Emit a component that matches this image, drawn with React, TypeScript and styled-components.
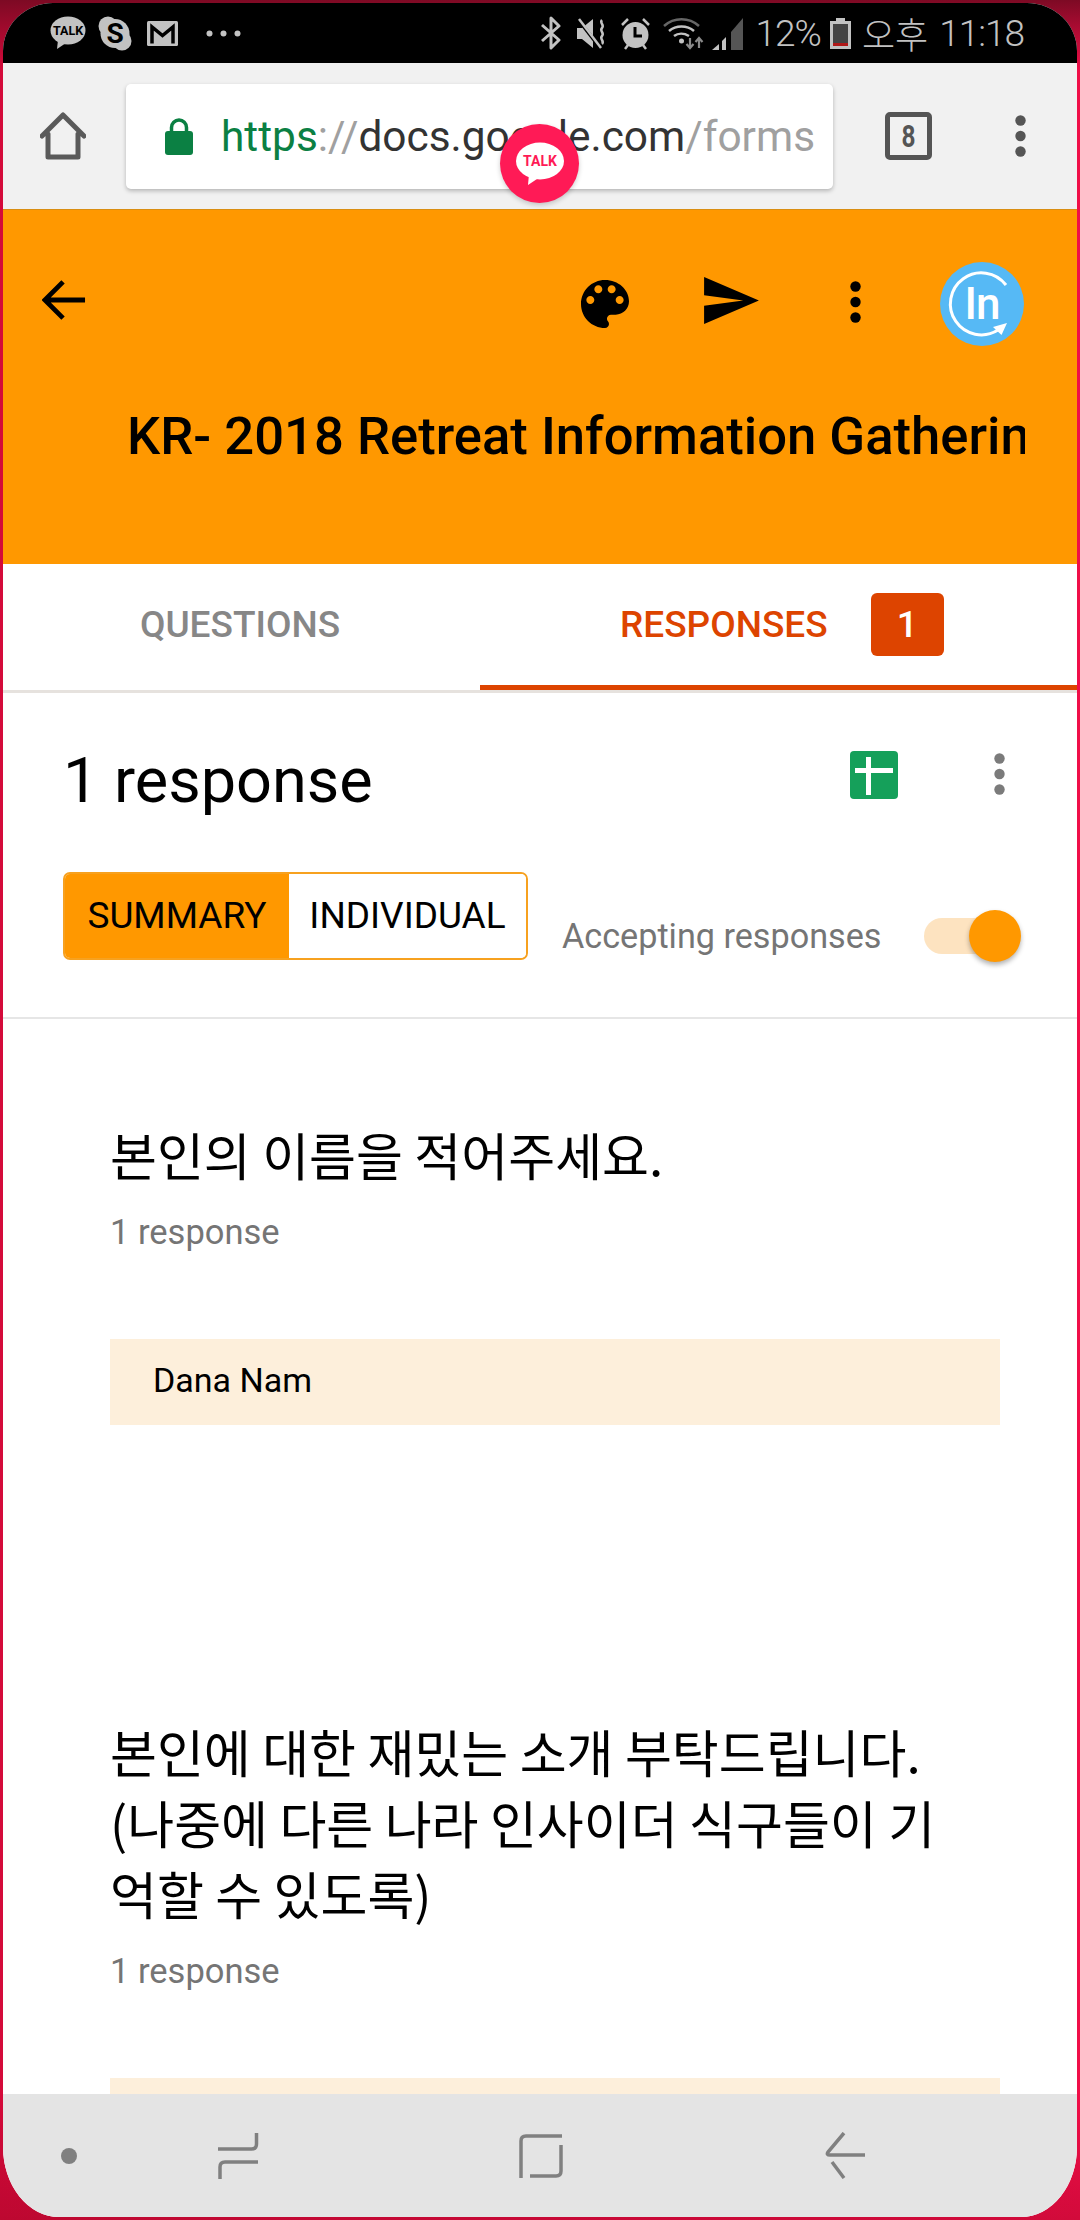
import styled, { createGlobalStyle } from 'styled-components';

const ORANGE = '#ff9800';
const RUST = '#dd4400';
const UI_FONT = `Roboto, 'Noto Sans CJK KR', sans-serif`;

const GlobalStyle = createGlobalStyle`
  html, body {
    margin: 0;
    padding: 0;
    background: #000;
  }
  * {
    box-sizing: border-box;
  }
`;

const Frame = styled.div`
  width: 1080px;
  height: 2220px;
  padding: 3px;
  overflow: hidden;
  font-family: ${UI_FONT};
  background:
    linear-gradient(to bottom, #7d0a24 0, rgba(125, 10, 36, 0) 70px),
    linear-gradient(to bottom, rgba(0, 0, 0, 0) 2100px, rgba(120, 0, 20, 0.25) 2220px),
    linear-gradient(to right, #d40a3a, #f00e48);
`;

const Screen = styled.div`
  position: relative;
  height: 100%;
  display: flex;
  flex-direction: column;
  overflow: hidden;
  background: #fff;
  border-radius: 50px 50px 56px 56px / 48px 48px 70px 70px;
`;

const StatusBar = styled.div`
  flex: 0 0 60px;
  display: flex;
  align-items: center;
  justify-content: space-between;
  padding: 0 53px 0 47px;
  background: #000;
  color: #c2c2c2;
`;

const StatusGroup = styled.div`
  display: flex;
  align-items: center;
`;

const StatusText = styled.span<{ $gap?: number }>`
  margin-left: ${(p) => p.$gap ?? 0}px;
  font-size: 37px;
  font-weight: 300;
  letter-spacing: -1px;
  line-height: 1;
`;

const StatusKorean = styled(StatusText)`
  font-family: 'Noto Sans CJK KR', sans-serif;
  font-size: 36px;
  font-weight: 300;
  letter-spacing: 0;
`;

const StatusIcon = styled.svg<{ $gap?: number }>`
  display: block;
  flex: none;
  margin-left: ${(p) => p.$gap ?? 0}px;
`;

const Toolbar = styled.div`
  flex: 0 0 147px;
  display: flex;
  align-items: center;
  padding-left: 37px;
  background: #f1f1f1;
  border-bottom: 1px solid #d98e12;
`;

const ToolIcon = styled.svg<{ $gap?: number; $lift?: number }>`
  display: block;
  flex: none;
  margin-left: ${(p) => p.$gap ?? 0}px;
  margin-bottom: ${(p) => (p.$lift ?? 0) * 2}px;
`;

const UrlBox = styled.div`
  width: 707px;
  height: 105px;
  margin-left: 40px;
  display: flex;
  align-items: center;
  padding-left: 39px;
  background: #fff;
  border-radius: 5px;
  box-shadow: 0 2px 4px rgba(0, 0, 0, 0.25);
`;

const UrlText = styled.div`
  margin-left: 28px;
  font-size: 42.4px;
  white-space: nowrap;
  color: #333;
`;

const UrlPart = styled.span<{ $color: string }>`
  color: ${(p) => p.$color};
`;

const ChatHead = styled.div`
  position: absolute;
  left: 497px;
  top: 121px;
  width: 79px;
  height: 79px;
  display: flex;
  align-items: center;
  justify-content: center;
  border-radius: 50%;
  background: #ff1a56;
  box-shadow: 0 2px 5px rgba(0, 0, 0, 0.2);
`;

const Header = styled.div`
  flex: 0 0 354px;
  display: flex;
  flex-direction: column;
  padding: 52px 53px 0 39px;
  background: ${ORANGE};
`;

const HeaderRow = styled.div`
  display: flex;
  align-items: center;
  height: 84px;
`;

const Spacer = styled.div`
  flex: 1;
`;

const Avatar = styled.div`
  position: relative;
  width: 84px;
  height: 84px;
  margin-left: 79px;
  display: flex;
  align-items: center;
  justify-content: center;
  border-radius: 50%;
  background: #56b9f5;
  color: #fff;
  font-size: 44px;
  font-weight: 500;
  letter-spacing: -1px;
`;

const AvatarRing = styled.svg`
  position: absolute;
  left: 0;
  top: 0;
`;

const FormTitle = styled.div`
  width: 898px;
  margin: 60px 0 0 85px;
  overflow: hidden;
  white-space: nowrap;
  font-size: 52.6px;
  font-weight: 500;
  line-height: 60px;
  color: #000;
`;

const Tabs = styled.div`
  flex: 0 0 129px;
  display: flex;
  border-bottom: 3px solid #e6e2de;
`;

const Tab = styled.div<{ $active?: boolean }>`
  flex: ${(p) => (p.$active ? '0 0 597px' : '0 0 477px')};
  display: flex;
  align-items: center;
  justify-content: ${(p) => (p.$active ? 'flex-start' : 'center')};
  padding: ${(p) => (p.$active ? '0 0 0 140px' : '0 3px 0 0')};
  font-size: 37px;
  font-weight: 500;
  color: ${(p) => (p.$active ? RUST : '#878787')};
  border-bottom: 5px solid ${(p) => (p.$active ? RUST : 'transparent')};
`;

const TabBadge = styled.span`
  width: 73px;
  height: 63px;
  margin-left: 43px;
  display: flex;
  align-items: center;
  justify-content: center;
  background: ${RUST};
  border-radius: 6px;
  color: #fff;
`;

const SummaryHead = styled.div`
  flex: 0 0 326px;
  display: flex;
  flex-direction: column;
  padding: 0 72px 0 60px;
  border-bottom: 2px solid #e6e6e6;
`;

const SummaryTop = styled.div`
  display: flex;
  align-items: center;
  height: 120px;
  margin-top: 27px;
`;

const ResponseCount = styled.div`
  flex: 1;
  font-size: 63px;
  color: #000;
`;

const SummaryBottom = styled.div`
  display: flex;
  align-items: center;
  margin-top: 32px;
`;

const Segments = styled.div`
  display: flex;
  height: 88px;
  width: 465px;
  border: 2px solid #f7a11f;
  border-radius: 7px;
  overflow: hidden;
`;

const Segment = styled.div<{ $active?: boolean }>`
  flex: ${(p) => (p.$active ? '0 0 224px' : '1')};
  display: flex;
  align-items: center;
  justify-content: center;
  padding-bottom: 1px;
  font-size: 37px;
  color: #000;
  background: ${(p) => (p.$active ? ORANGE : '#fff')};
`;

const AcceptLabel = styled.div`
  margin: 40px 0 0 34px;
  font-size: 34.2px;
  color: #757575;
  white-space: nowrap;
`;

const Switch = styled.div`
  position: relative;
  width: 79px;
  height: 36px;
  margin: 40px 0 0 42px;
  background: #fde3c0;
  border-radius: 18px;
`;

const SwitchThumb = styled.div`
  position: absolute;
  right: -18px;
  top: -8px;
  width: 52px;
  height: 52px;
  border-radius: 50%;
  background: ${ORANGE};
  box-shadow: 0 3px 5px rgba(0, 0, 0, 0.3);
`;

const Content = styled.div`
  flex: 1;
  min-height: 0;
  overflow: hidden;
  display: flex;
  flex-direction: column;
  padding: 0 77px 0 107px;
`;

const Question = styled.section<{ $top: number }>`
  margin-top: ${(p) => p.$top}px;
`;

const QuestionTitle = styled.h2`
  margin: 0;
  font-family: 'Noto Sans CJK KR', sans-serif;
  font-size: 51px;
  font-weight: 400;
  line-height: 71px;
  color: #000;
`;

const ResponseNote = styled.div`
  margin-top: 22px;
  font-size: 34.5px;
  line-height: 40px;
  color: #757575;
`;

const AnswerBox = styled.div`
  height: 86px;
  margin-top: 87px;
  display: flex;
  align-items: center;
  padding: 0 0 4px 43px;
  background: #fdefdb;
  font-size: 34px;
  color: #000;
`;

const NavBar = styled.div`
  flex: 0 0 123px;
  position: relative;
  z-index: 1;
  display: flex;
  align-items: center;
  padding: 0 0 0 58px;
  background: #e4e4e4;
`;

const NavIcon = styled.svg<{ $gap?: number }>`
  display: block;
  flex: none;
  margin-left: ${(p) => p.$gap ?? 0}px;
`;

const DotsIcon = ({ color, gap, lift, height = 42 }: { color: string; gap?: number; lift?: number; height?: number }) => (
  <ToolIcon $gap={gap} $lift={lift} width={11} height={height} viewBox={`0 0 11 ${height}`} fill={color}>
    <circle cx="5.5" cy="5.5" r="5.2" />
    <circle cx="5.5" cy={height / 2} r="5.2" />
    <circle cx="5.5" cy={height - 5.5} r="5.2" />
  </ToolIcon>
);

export default function App() {
  return (
    <>
      <GlobalStyle />
      <Frame>
        <Screen>
          <StatusBar>
            <StatusGroup>
              <StatusIcon width={36} height={34} viewBox="0 0 36 34">
                <ellipse cx="18" cy="14.5" rx="17.5" ry="14" fill="#c2c2c2" />
                <path d="M8 24l-1 9 9-6z" fill="#c2c2c2" />
                <text x="18" y="19" fontSize="12.5" fontWeight="700" textAnchor="middle" fill="#000" fontFamily="Roboto, sans-serif">TALK</text>
              </StatusIcon>
              <StatusIcon $gap={12} width={34} height={35} viewBox="0 0 34 35">
                <circle cx="10" cy="10" r="9.5" fill="#c2c2c2" />
                <circle cx="24" cy="25" r="9.5" fill="#c2c2c2" />
                <circle cx="17" cy="17.5" r="14.5" fill="#c2c2c2" />
                <text x="17" y="27" fontSize="28" fontWeight="700" textAnchor="middle" fill="#000" fontFamily="Roboto, sans-serif">S</text>
              </StatusIcon>
              <StatusIcon $gap={15} width={31} height={25} viewBox="0 0 31 25">
                <rect width="31" height="25" rx="1.5" fill="#c2c2c2" />
                <path d="M5 22.5V6l10.5 8.5L26 6v16.500" fill="none" stroke="#000" strokeWidth="3.500" />
              </StatusIcon>
              <StatusIcon $gap={28} width={35} height={7} viewBox="0 0 35 7" fill="#c2c2c2">
                <circle cx="3.500" cy="3.500" r="3" />
                <circle cx="17.500" cy="3.500" r="3" />
                <circle cx="31.500" cy="3.500" r="3" />
              </StatusIcon>
            </StatusGroup>
            <StatusGroup>
              <StatusIcon width={20} height={34} viewBox="0 0 20 34">
                <path d="M1 9l17 15-8 8V2l8 8L1 25" fill="none" stroke="#c2c2c2" strokeWidth="3" strokeLinejoin="round" />
              </StatusIcon>
              <StatusIcon $gap={15} width={33} height={33} viewBox="0 0 33 33">
                <path d="M1 11h5l11-9v29L6 22H1z" fill="#c2c2c2" />
                <path d="M1 1l24 31" stroke="#000" strokeWidth="3.500" />
                <path d="M3 2l22 29" stroke="#c2c2c2" strokeWidth="2.500" />
                <path d="M26 3c-3 3 3 5 0 8s3 5 0 8 3 5 0 8" fill="none" stroke="#c2c2c2" strokeWidth="2.500" />
              </StatusIcon>
              <StatusIcon $gap={11} width={31} height={33} viewBox="0 0 31 33">
                <circle cx="15.500" cy="18" r="13" fill="#c2c2c2" />
                <path d="M15 10v9h7" fill="none" stroke="#000" strokeWidth="3" />
                <path d="M2 8l6-6M29 8l-6-6M5 32l3-4M26 32l-3-4" stroke="#c2c2c2" strokeWidth="2.500" />
              </StatusIcon>
              <StatusIcon $gap={12} width={42} height={33} viewBox="0 0 42 33">
                <path d="M1 9c10-9 25-9 35 0" fill="none" stroke="#666" strokeWidth="2.500" />
                <path d="M6 14c7-6 18-6 25 0" fill="none" stroke="#c2c2c2" strokeWidth="2.500" />
                <path d="M11 19c4-3 10-3 15 0" fill="none" stroke="#c2c2c2" strokeWidth="2.500" />
                <circle cx="18.500" cy="24" r="2.500" fill="#c2c2c2" />
                <path d="M27 21v9M23.500 27l3.500 4 3.500-4" fill="none" stroke="#8a8a8a" strokeWidth="2.200" />
                <path d="M36 31v-9M32.500 25l3.500-4 3.500 4" fill="none" stroke="#8a8a8a" strokeWidth="2.200" />
              </StatusIcon>
              <StatusIcon $gap={7} width={31} height={33} viewBox="0 0 31 33">
                <path d="M0 33l7-6v6z" fill="#c2c2c2" />
                <path d="M10 24l4-4v13h-4z" fill="#c2c2c2" />
                <path d="M19 15L31 1v32H19z" fill="#555" />
              </StatusIcon>
              <StatusText $gap={12}>12%</StatusText>
              <StatusIcon $gap={9} width={21} height={31} viewBox="0 0 21 31">
                <path d="M6 0h9v3h6v28H0V3h6z" fill="#c2c2c2" />
                <rect x="3" y="6" width="15" height="22" fill="#444" />
                <rect x="3" y="25" width="15" height="3" fill="#b01818" />
              </StatusIcon>
              <StatusKorean $gap={11}>오후</StatusKorean>
              <StatusText $gap={11}>11:18</StatusText>
            </StatusGroup>
          </StatusBar>

          <Toolbar>
            <ToolIcon width={46} height={48} viewBox="0 0 46 48">
              <path d="M8 22v23h30V22M2 24L23 3l21 21" fill="none" stroke="#5a5a5a" strokeWidth="5" strokeLinejoin="round" strokeLinecap="round" />
            </ToolIcon>
            <UrlBox>
              <ToolIcon width={28} height={37} viewBox="0 0 28 37">
                <path d="M6.500 15V9.500a7.500 7.500 0 0 1 15 0V15" fill="none" stroke="#0b8043" strokeWidth="3.500" />
                <rect y="13" width="28" height="24" rx="3" fill="#0b8043" />
              </ToolIcon>
              <UrlText>
                <UrlPart $color="#0b8043">https</UrlPart>
                <UrlPart $color="#a0a0a0">://</UrlPart>
                docs.google.com
                <UrlPart $color="#a0a0a0">/forms</UrlPart>
              </UrlText>
            </UrlBox>
            <ToolIcon $gap={52} width={47} height={48} viewBox="0 0 47 48">
              <rect x="2.500" y="2.500" width="42" height="43" rx="2.500" fill="none" stroke="#555" strokeWidth="5" />
              <text x="23.500" y="35" fontSize="31" fontWeight="700" textAnchor="middle" fill="#555" fontFamily="Roboto, sans-serif" textLength="14" lengthAdjust="spacingAndGlyphs">8</text>
            </ToolIcon>
            <DotsIcon color="#555" gap={83} />
          </Toolbar>

          <ChatHead>
            <svg width="50" height="44" viewBox="0 0 50 44">
              <ellipse cx="25" cy="19" rx="24" ry="18.500" fill="#fff" />
              <path d="M14 32l-1 11 12-8z" fill="#fff" />
              <text x="25" y="24" fontSize="14" fontWeight="700" textAnchor="middle" fill="#ff1a56" fontFamily="Roboto, sans-serif">TALK</text>
            </svg>
          </ChatHead>

          <Header>
            <HeaderRow>
              <ToolIcon $lift={4} width={44} height={42} viewBox="0 0 46 42">
                <path d="M45 21H4M22 2L3 21l19 19" fill="none" stroke="#000" strokeWidth="5" />
              </ToolIcon>
              <Spacer />
              <ToolIcon width={48} height={48} viewBox="3 3 18 18">
                <path d="M12 3c-4.970 0-9 4.030-9 9s4.030 9 9 9c.83 0 1.500-.67 1.500-1.500 0-.39-.15-.74-.39-1.010-.23-.26-.38-.61-.38-.99 0-.83.67-1.500 1.500-1.500H16c2.760 0 5-2.240 5-5 0-4.420-4.030-8-9-8zm-5.500 9c-.83 0-1.500-.67-1.500-1.500S5.670 9 6.500 9 8 9.670 8 10.500 7.330 12 6.500 12zm3-4C8.670 8 8 7.330 8 6.500S8.670 5 9.500 5s1.500.67 1.500 1.500S10.330 8 9.500 8zm5 0c-.83 0-1.500-.67-1.500-1.500S13.670 5 14.500 5s1.500.67 1.500 1.500S15.330 8 14.500 8zm3 4c-.83 0-1.500-.67-1.500-1.500S16.670 9 17.500 9s1.500.67 1.500 1.500-.67 1.500-1.500 1.500z" fill="#000" />
              </ToolIcon>
              <ToolIcon $gap={75} $lift={4} width={55} height={47} viewBox="2 3 21 18">
                <path d="M2.010 21L23 12 2.010 3 2 10l15 2-15 2z" fill="#000" />
              </ToolIcon>
              <DotsIcon color="#000" gap={91} lift={2} />
              <Avatar>
                <AvatarRing width={84} height={84} viewBox="0 0 84 84">
                  <path d="M66 23A31 31 0 1 0 58 68" fill="none" stroke="#fff" strokeWidth="3" />
                  <path d="M53 65l14-4-5.500 12z" fill="#fff" />
                </AvatarRing>
                In
              </Avatar>
            </HeaderRow>
            <FormTitle>KR- 2018 Retreat Information Gathering</FormTitle>
          </Header>

          <Tabs>
            <Tab>QUESTIONS</Tab>
            <Tab $active>
              RESPONSES
              <TabBadge>1</TabBadge>
            </Tab>
          </Tabs>

          <SummaryHead>
            <SummaryTop>
              <ResponseCount>1 response</ResponseCount>
              <ToolIcon $lift={5.5} width={48} height={48} viewBox="0 0 48 48">
                <rect width="48" height="48" rx="4" fill="#15a05a" />
                <path d="M5 19.500h38M18.500 6v38" stroke="#fff" strokeWidth="5" />
              </ToolIcon>
              <DotsIcon color="#7b7b7b" gap={96} lift={6.5} />
            </SummaryTop>
            <SummaryBottom>
              <Segments>
                <Segment $active>SUMMARY</Segment>
                <Segment>INDIVIDUAL</Segment>
              </Segments>
              <AcceptLabel>Accepting responses</AcceptLabel>
              <Switch>
                <SwitchThumb />
              </Switch>
            </SummaryBottom>
          </SummaryHead>

          <Content>
            <Question $top={100}>
              <QuestionTitle>본인의 이름을 적어주세요.</QuestionTitle>
              <ResponseNote>1 response</ResponseNote>
              <AnswerBox>Dana Nam</AnswerBox>
            </Question>
            <Question $top={291}>
              <QuestionTitle>
                본인에 대한 재밌는 소개 부탁드립니다.
                <br />
                (나중에 다른 나라 인사이더 식구들이 기
                <br />
                억할 수 있도록)
              </QuestionTitle>
              <ResponseNote>1 response</ResponseNote>
              <AnswerBox />
            </Question>
          </Content>

          <NavBar>
            <NavIcon width={16} height={16} viewBox="0 0 16 16">
              <circle cx="8" cy="8" r="8" fill="#808080" />
            </NavIcon>
            <NavIcon $gap={140} width={42} height={48} viewBox="0 0 42 48" fill="none" stroke="#808080" strokeWidth="3.500">
              <path d="M39.500 1v11q0 5-5 5H1" />
              <path d="M41 30H8q-5 0-5 5v12" />
            </NavIcon>
            <NavIcon $gap={260} width={44} height={46} viewBox="0 0 44 46" fill="none" stroke="#808080" strokeWidth="3.500">
              <path d="M43 3H7Q2 3 2 8v37" />
              <path d="M11 43h26q5 0 5-5V12" />
            </NavIcon>
            <NavIcon $gap={261} width={42} height={47} viewBox="0 0 42 47" fill="none" stroke="#808080" strokeWidth="3.500">
              <path d="M20 1L4 20q-2 3 2 3h35" />
              <path d="M8 30l12 16" />
            </NavIcon>
          </NavBar>
        </Screen>
      </Frame>
    </>
  );
}
